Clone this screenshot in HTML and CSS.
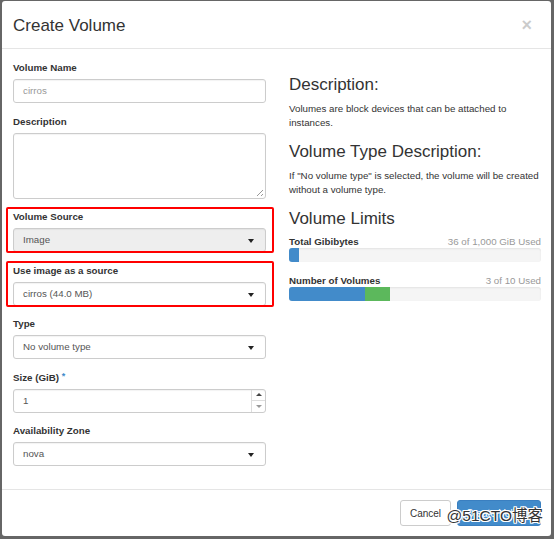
FILE: index.html
```html
<!DOCTYPE html>
<html>
<head>
<meta charset="utf-8">
<link rel="stylesheet" href="styles.css">
</head>
<body>
<div class="modal">
  <div class="modal-header">
    <h4 class="modal-title">Create Volume</h4>
    <span class="close">&times;</span>
  </div>
  <div class="modal-body">
    <div class="left">
      <div class="group">
        <label class="lbl">Volume Name</label>
        <div class="ctrl placeholder">cirros</div>
      </div>
      <div class="group">
        <label class="lbl">Description</label>
        <div class="ctrl textarea"><span class="grip"></span></div>
      </div>
      <div class="group marked">
        <label class="lbl">Volume Source</label>
        <div class="ctrl select disabled">Image<span class="caret"></span></div>
      </div>
      <div class="group marked">
        <label class="lbl">Use image as a source</label>
        <div class="ctrl select">cirros (44.0 MB)<span class="caret"></span></div>
      </div>
      <div class="group">
        <label class="lbl">Type</label>
        <div class="ctrl select">No volume type<span class="caret"></span></div>
      </div>
      <div class="group">
        <label class="lbl">Size (GiB) <span class="req">*</span></label>
        <div class="ctrl number">1
          <span class="spin">
            <span class="spin-up"><span class="tri-up"></span></span>
            <span class="spin-down"><span class="tri-down"></span></span>
          </span>
        </div>
      </div>
      <div class="group">
        <label class="lbl">Availability Zone</label>
        <div class="ctrl select">nova<span class="caret"></span></div>
      </div>
    </div>
    <div class="right">
      <h3 class="h3">Description:</h3>
      <p class="para">Volumes are block devices that can be attached to instances.</p>
      <h3 class="h3">Volume Type Description:</h3>
      <p class="para">If "No volume type" is selected, the volume will be created without a volume type.</p>
      <h3 class="h3">Volume Limits</h3>
      <div class="quota">
        <div class="quota-row"><strong>Total Gibibytes</strong><span class="used">36 of 1,000 GiB Used</span></div>
        <div class="bar"><div class="fill blue" style="width:10px"></div></div>
      </div>
      <div class="quota">
        <div class="quota-row"><strong>Number of Volumes</strong><span class="used">3 of 10 Used</span></div>
        <div class="bar"><div class="fill blue" style="width:76px"></div><div class="fill green" style="width:25px"></div></div>
      </div>
    </div>
  </div>
  <div class="modal-footer">
    <button class="btn btn-default">Cancel</button>
    <button class="btn btn-primary">Create Volume</button>
  </div>
  <div class="watermark">@51CTO博客</div>
</div>
</body>
</html>
```
FILE: styles.css
```css
html, body {
  margin: 0;
  padding: 0;
}
body {
  width: 554px;
  height: 539px;
  background: #666;
  box-sizing: border-box;
  padding: 1px 3px 3px 2px;
  font-family: "Liberation Sans", Arial, sans-serif;
  color: #333;
  font-size: 9.75px;
  line-height: 14px;
}
.modal {
  position: relative;
  background: #fff;
  border-radius: 3px;
  height: 535px;
  overflow: hidden;
  display: flex;
  flex-direction: column;
}
.modal-header {
  display: flex;
  justify-content: space-between;
  align-items: center;
  padding: 12px 19px 9px 11px;
  border-bottom: 1px solid #e5e5e5;
}
.modal-title {
  margin: 0;
  font-size: 17px;
  line-height: 26px;
  font-weight: normal;
  color: #333;
}
.close {
  font-size: 18px;
  font-weight: bold;
  color: #000;
  opacity: 0.2;
  line-height: 18px;
  margin-top: -3px;
}
.modal-body {
  display: grid;
  grid-template-columns: 253px 252px;
  column-gap: 23px;
  padding: 12px 10px 11.5px 11px;
  flex: 1;
}
.group {
  position: relative;
  margin-bottom: 11.5px;
}
.marked::after {
  content: "";
  position: absolute;
  left: -7px;
  right: -8px;
  top: -3px;
  bottom: -1px;
  border: 2px solid #f00;
  border-radius: 2px;
}
.lbl {
  display: block;
  font-weight: bold;
  line-height: 14px;
  margin-bottom: 4px;
}
.req {
  color: #428bca;
  font-size: 9px;
  vertical-align: top;
  position: relative;
  top: -2px;
}
.ctrl {
  position: relative;
  height: 24px;
  box-sizing: border-box;
  border: 1px solid #ccc;
  border-radius: 3px;
  padding: 0 9px;
  line-height: 22px;
  color: #555;
  box-shadow: inset 0 1px 1px rgba(0,0,0,0.05);
}
.placeholder {
  color: #999;
}
.textarea {
  height: 66px;
}
.grip {
  position: absolute;
  right: 2px;
  bottom: 2px;
  width: 6px;
  height: 6px;
  background: linear-gradient(135deg, transparent 45%, #999 45%, #999 55%, transparent 55%, transparent 75%, #999 75%, #999 85%, transparent 85%);
}
.select .caret {
  position: absolute;
  right: 11px;
  top: 10px;
  width: 0;
  height: 0;
  border-left: 3.5px solid transparent;
  border-right: 3.5px solid transparent;
  border-top: 4px solid #222;
}
.disabled {
  background: #eee;
}
.number .spin {
  position: absolute;
  right: 0;
  top: 0;
  bottom: 0;
  width: 13px;
  border-left: 1px solid #ddd;
  display: flex;
  flex-direction: column;
}
.spin-up, .spin-down {
  flex: 1;
  display: flex;
  align-items: center;
  justify-content: center;
}
.spin-up {
  border-bottom: 1px solid #ddd;
}
.tri-up {
  width: 0;
  height: 0;
  border-left: 3px solid transparent;
  border-right: 3px solid transparent;
  border-bottom: 3px solid #444;
}
.tri-down {
  width: 0;
  height: 0;
  border-left: 3px solid transparent;
  border-right: 3px solid transparent;
  border-top: 3px solid #999;
}
.right {
  display: flex;
  flex-direction: column;
}
.h3 {
  font-size: 17px;
  line-height: 19px;
  font-weight: normal;
  margin: 12.5px 0 7.5px;
  color: #333;
}
.h3:first-child {
  margin-top: 14px;
}
.para {
  margin: 0;
}
.quota {
  margin-top: 0;
  margin-bottom: 13px;
}
.quota-row {
  display: flex;
  justify-content: space-between;
  line-height: 12px;
}
.used {
  color: #999;
}
.bar {
  display: flex;
  height: 14px;
  margin-top: 0;
  background: #f5f5f5;
  border-radius: 3px;
  overflow: hidden;
  box-shadow: inset 0 1px 2px rgba(0,0,0,0.08);
}
.fill {
  height: 100%;
}
.blue {
  background: #428bca;
}
.green {
  background: #5cb85c;
}
.modal-footer {
  border-top: 1px solid #e5e5e5;
  padding: 10px 10px 10px;
  display: flex;
  justify-content: flex-end;
  gap: 6px;
}
.btn {
  height: 26px;
  font-family: "Liberation Sans", Arial, sans-serif;
  font-size: 10px;
  border-radius: 3px;
  padding: 0 6px;
  border: 1px solid #ccc;
  cursor: pointer;
}
.btn-default {
  background: #fff;
  color: #333;
  width: 51px;
}
.btn-primary {
  background: #428bca;
  border-color: #3a7fc0;
  color: #fff;
  width: 84px;
}
.watermark {
  position: absolute;
  right: 8px;
  bottom: 10px;
  font-family: "Liberation Sans", "Noto Sans CJK SC", sans-serif;
  font-size: 15.5px;
  line-height: 20px;
  color: #333;
  text-shadow: -1px -1px 0 #fff, 1px -1px 0 #fff, -1px 1px 0 #fff, 1px 1px 0 #fff, 0 1px 0 #fff, 0 -1px 0 #fff, 1px 0 0 #fff, -1px 0 0 #fff;
}
```
